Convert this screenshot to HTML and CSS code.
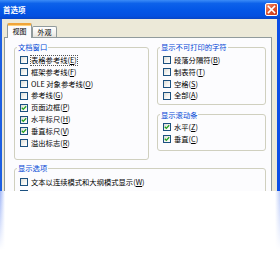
FILE: index.html
```html
<!DOCTYPE html>
<html>
<head>
<meta charset="utf-8">
<link rel="stylesheet" href="styles.css">
</head>
<body>
<div class="window">
  <div class="titlebar">
    <span class="title">首选项</span>
    <span class="close"><svg width="9" height="9" viewBox="0 0 9 9"><path d="M1.5 1.5 L7.5 7.5 M7.5 1.5 L1.5 7.5" stroke="#fff" stroke-width="1.6" stroke-linecap="square"/></svg></span>
  </div>
  <div class="body">
    <div class="tabs">
      <div class="tab active">视图</div>
      <div class="tab">外观</div>
    </div>
    <div class="panel">
      <div class="cols">
        <fieldset class="group g1">
          <legend>文档窗口</legend>
          <div class="row"><span class="cb"></span><span class="lbl focus">表格参考线(<u>E</u>)</span></div>
          <div class="row"><span class="cb"></span><span class="lbl">框架参考线(<u>F</u>)</span></div>
          <div class="row"><span class="cb"></span><span class="lbl">OLE 对象参考线(<u>O</u>)</span></div>
          <div class="row"><span class="cb"></span><span class="lbl">参考线(<u>G</u>)</span></div>
          <div class="row"><span class="cb on"><svg width="6" height="6" viewBox="0 0 6 6"><path d="M0.8 2.8 L2.3 4.4 L5.2 1.2" fill="none" stroke="#21a121" stroke-width="1.3"/></svg></span><span class="lbl">页面边框(<u>P</u>)</span></div>
          <div class="row"><span class="cb on"><svg width="6" height="6" viewBox="0 0 6 6"><path d="M0.8 2.8 L2.3 4.4 L5.2 1.2" fill="none" stroke="#21a121" stroke-width="1.3"/></svg></span><span class="lbl">水平标尺(<u>H</u>)</span></div>
          <div class="row"><span class="cb on"><svg width="6" height="6" viewBox="0 0 6 6"><path d="M0.8 2.8 L2.3 4.4 L5.2 1.2" fill="none" stroke="#21a121" stroke-width="1.3"/></svg></span><span class="lbl">垂直标尺(<u>V</u>)</span></div>
          <div class="row"><span class="cb"></span><span class="lbl">溢出标志(<u>R</u>)</span></div>
        </fieldset>
        <div class="rightcol">
          <fieldset class="group g2">
            <legend>显示不可打印的字符</legend>
            <div class="row"><span class="cb"></span><span class="lbl">段落分隔符(<u>B</u>)</span></div>
            <div class="row"><span class="cb"></span><span class="lbl">制表符(<u>T</u>)</span></div>
            <div class="row"><span class="cb"></span><span class="lbl">空格(<u>S</u>)</span></div>
            <div class="row"><span class="cb"></span><span class="lbl">全部(<u>A</u>)</span></div>
          </fieldset>
          <fieldset class="group g3">
            <legend>显示滚动条</legend>
            <div class="row"><span class="cb on"><svg width="6" height="6" viewBox="0 0 6 6"><path d="M0.8 2.8 L2.3 4.4 L5.2 1.2" fill="none" stroke="#21a121" stroke-width="1.3"/></svg></span><span class="lbl">水平(<u>Z</u>)</span></div>
            <div class="row"><span class="cb on"><svg width="6" height="6" viewBox="0 0 6 6"><path d="M0.8 2.8 L2.3 4.4 L5.2 1.2" fill="none" stroke="#21a121" stroke-width="1.3"/></svg></span><span class="lbl">垂直(<u>C</u>)</span></div>
          </fieldset>
        </div>
      </div>
      <fieldset class="group g4">
        <legend>显示选项</legend>
        <div class="row"><span class="cb"></span><span class="lbl">文本以连续模式和大纲模式显示(<u>W</u>)</span></div>
        <div class="row"><span class="cb"></span></div>
      </fieldset>
    </div>
  </div>
</div>
<div class="ghost"></div>
</body>
</html>
```
FILE: styles.css
```css
* { box-sizing: border-box; }
body {
  margin: 0;
  width: 280px;
  height: 270px;
  overflow: hidden;
  background: #fff;
  font-family: "Noto Sans CJK SC", "Liberation Sans", sans-serif;
  color: #000;
}
.window {
  height: 191px;
  overflow: hidden;
  background: #ece9d8;
}
.titlebar {
  height: 19px;
  display: flex;
  align-items: center;
  justify-content: space-between;
  padding: 0 2px 0 3px;
  background: linear-gradient(#3b8cf7, #0d62ea 18%, #0356e6 55%, #0350e0 85%, #0845c4);
}
.title {
  color: #fff;
  font-weight: bold;
  font-size: 7.5px;
  line-height: 10px;
}
.close {
  width: 13px;
  height: 13px;
  border: 1px solid #fff;
  border-radius: 2px;
  background: linear-gradient(135deg, #f0967a, #e0552f 45%, #c9381a);
  display: flex;
  align-items: center;
  justify-content: center;
}
.body {
  height: 172px;
  border-left: 2px solid #1d5fe2;
  border-right: 3px solid #0b4ee6;
  padding: 4px 5px 0 2px;
}
.tabs {
  display: flex;
  align-items: flex-start;
  height: 14px;
  padding-left: 3px;
  position: relative;
  z-index: 1;
}
.tab {
  width: 25px;
  height: 11px;
  margin-top: 3px;
  border: 1px solid #919b9c;
  border-bottom: none;
  border-radius: 2px 2px 0 0;
  background: linear-gradient(#ffffff, #f3f2ee 60%, #e6e4dc);
  font-size: 7px;
  line-height: 9px;
  display: flex;
  align-items: center;
  justify-content: center;
}
.tab.active {
  height: 15px;
  margin-top: 0;
  margin-bottom: -1px;
  background: #fcfcfe;
  border-top: 2px solid #f0a53a;
  box-shadow: inset 0 1px 0 #ffd27a;
}
.panel {
  height: 200px;
  border: 1px solid #919b9c;
  background: #fcfcfe;
  padding: 4px 5px 0 9px;
}
.cols {
  display: grid;
  grid-template-columns: 135px 109px;
  column-gap: 8px;
  align-items: start;
}
.group {
  margin: 0;
  min-width: 0;
  border: 1px solid #d0d0bf;
  border-radius: 3px;
  padding: 2.5px 2px 0 5px;
}
.group legend {
  padding: 0 1px;
  margin-left: -3px;
  font-size: 7.3px;
  line-height: 10px;
  color: #0046d5;
}
.g1 { padding-bottom: 10px; }
.g2 { padding-bottom: 2.5px; }
.g3 { margin-top: 4.5px; padding-top: 1.5px; padding-bottom: 4.5px; }
.g4 { margin-top: 3px; padding-top: 3px; }
.row {
  display: flex;
  align-items: center;
  height: 11.85px;
  white-space: nowrap;
  font-size: 7.3px;
}
.cb {
  flex: none;
  width: 8px;
  height: 8px;
  margin-right: 3px;
  border: 1px solid #1c5180;
  background: linear-gradient(135deg, #dcdcd5, #f6f6f3 60%, #fff);
  display: flex;
  align-items: center;
  justify-content: center;
}
.lbl {
  line-height: 9px;
}
.lbl u {
  text-decoration-thickness: 0.5px;
  text-underline-offset: 1px;
}
.lbl.focus {
  outline: 1px dotted #555;
  outline-offset: 0;
}
.ghost {
  height: 79px;
  background:
    linear-gradient(rgba(255,255,255,0), #fff 75%),
    linear-gradient(to right, rgba(40,90,235,0.45), rgba(255,255,255,0) 5px, rgba(255,255,255,0) 275px, rgba(40,90,235,0.3));
}
```
